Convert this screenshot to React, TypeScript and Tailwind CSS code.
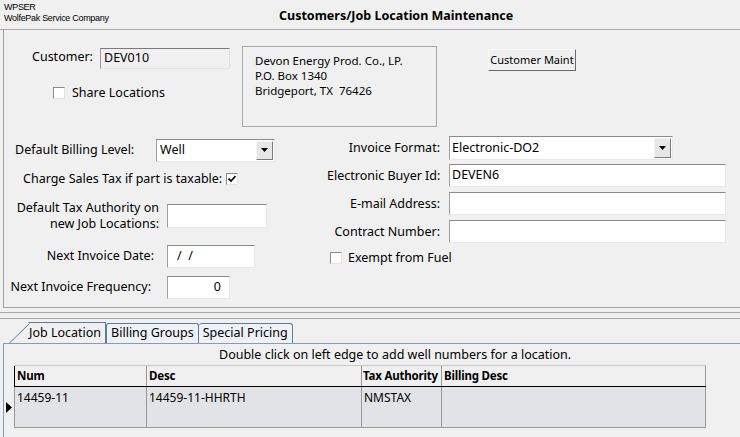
import React from "react";

const sunken = "border border-t-[#8a8a8a] border-l-[#a0a0a0] border-b-[#e8e8e8] border-r-[#e8e8e8] bg-white";

const DropArrow: React.FC = () => (
    <div className="flex h-full w-[17px] items-center justify-center border border-t-[#f4f4f4] border-l-[#f4f4f4] border-b-[#7a7a7a] border-r-[#7a7a7a] bg-[#e6e6e6]">
        <svg width="7" height="4" viewBox="0 0 7 4">
            <path d="M0 0h7L3.5 4z" fill="#000"/>
        </svg>
    </div>
)

const CheckBox: React.FC<{ checked?: boolean }> = ({checked}) => (
    <div className="flex h-[12px] w-[12px] items-center justify-center border border-t-[#8a8a8a] border-l-[#8a8a8a] border-b-[#e3e3e3] border-r-[#e3e3e3] bg-white">
        {checked && (
            <svg width="8" height="8" viewBox="0 0 8 8">
                <path d="M0.5 3.5L3 6L7.5 1" stroke="#000" strokeWidth="1.6" fill="none"/>
            </svg>
        )}
    </div>
)

const Label: React.FC<{ w: string, children: React.ReactNode }> = ({w, children}) => (
    <div className={`${w} shrink-0 whitespace-nowrap text-right leading-[16px]`}>{children}</div>
)

export default function App() {
    return (
        <div className="relative h-[437px] w-[740px] overflow-hidden bg-[#f0f0f0] text-[12.5px] text-black" style={{fontFamily: '"Noto Sans", sans-serif'}}>
            {/* header */}
            <div className="flex h-[30px] border-b border-[#a8a8a8]">
                <div className="w-[116px] whitespace-nowrap pl-[4px] pt-[2px] text-[9px] leading-[11px] tracking-[-0.3px]" style={{fontFamily: '"Liberation Sans", sans-serif'}}>
                    <div>WPSER</div>
                    <div>WolfePak Service Company</div>
                </div>
                <div className="ml-[163px] whitespace-nowrap pt-[7px] text-[12.5px] font-bold">Customers/Job Location Maintenance</div>
            </div>

            {/* main panel */}
            <div className="ml-[3px] h-[278px] border-l border-b border-[#a0a0a0]">
                <div className="flex pt-[16px]">
                    <div className="w-[238px]">
                        <div className="flex items-center">
                            <div className="ml-[28px] w-[68px]">Customer:</div>
                            <div className="mt-[2px] flex h-[21px] w-[130px] items-center border border-t-[#7a7a7a] border-l-[#9a9a9a] border-b-[#e3e3e3] border-r-[#e3e3e3] bg-[#f0f0f0] pl-[3px]">DEV010</div>
                        </div>
                        <div className="ml-[49px] mt-[15px] flex items-center gap-[7px]">
                            <CheckBox/>
                            <span>Share Locations</span>
                        </div>
                    </div>
                    <div className="h-[81px] w-[195px] border border-[#a8a8a8] pl-[12px] pt-[6px] text-[11.5px] leading-[15px]">
                        <div>Devon Energy Prod. Co., LP.</div>
                        <div>P.O. Box 1340</div>
                        <div>Bridgeport, TX&nbsp; 76426</div>
                    </div>
                    <div className="ml-[51px] mt-[3px] flex h-[22px] w-[88px] items-center justify-center whitespace-nowrap border border-t-[#fafafa] border-l-[#fafafa] border-b-[#6a6a6a] border-r-[#6a6a6a] bg-[#f0f0f0] text-[11px]">
                        Customer Maint
                    </div>
                </div>

                <div className="mt-[11px] flex">
                    {/* left column */}
                    <div className="w-[300px]">
                        <div className="flex h-[24px] items-center">
                            <div className="ml-[11px] w-[141px] whitespace-nowrap">Default Billing Level:</div>
                            <div className={`flex h-[23px] w-[119px] items-center justify-between ${sunken} p-[1px]`}>
                                <span className="pl-[2px]">Well</span>
                                <DropArrow/>
                            </div>
                        </div>
                        <div className="mt-[8px] flex items-center">
                            <span className="ml-[19px] whitespace-nowrap">Charge Sales Tax if part is taxable:</span>
                            <div className="ml-[4px]"><CheckBox checked/></div>
                        </div>
                        <div className="mt-[11px] flex items-center">
                            <Label w="w-[155px]">Default Tax Authority on<br/>new Job Locations:</Label>
                            <div className={`ml-[8px] h-[24px] w-[100px] ${sunken}`}/>
                        </div>
                        <div className="mt-[13px] flex items-center">
                            <Label w="w-[150px]">Next Invoice Date:</Label>
                            <div className={`ml-[13px] flex h-[23px] w-[88px] items-center pl-[9px] ${sunken}`}>/&nbsp;&nbsp;/</div>
                        </div>
                        <div className="mt-[8px] flex items-center">
                            <Label w="w-[147px]">Next Invoice Frequency:</Label>
                            <div className={`ml-[16px] flex h-[23px] w-[63px] items-center justify-end pr-[8px] ${sunken}`}>0</div>
                        </div>
                    </div>

                    {/* right column */}
                    <div className="ml-[23px] w-[400px]">
                        <div className="-mt-[2px] flex h-[24px] items-center">
                            <Label w="w-[113px]">Invoice Format:</Label>
                            <div className={`ml-[9px] flex h-[24px] w-[224px] items-center justify-between ${sunken} p-[1px]`}>
                                <span className="pl-[1px]">Electronic-DO2</span>
                                <DropArrow/>
                            </div>
                        </div>
                        <div className="mt-[4px] flex items-center">
                            <Label w="w-[113px]">Electronic Buyer Id:</Label>
                            <div className={`ml-[9px] flex h-[23px] w-[277px] items-center pl-[2px] ${sunken}`}>DEVEN6</div>
                        </div>
                        <div className="mt-[5px] flex items-center">
                            <Label w="w-[113px]">E-mail Address:</Label>
                            <div className={`ml-[9px] h-[23px] w-[277px] ${sunken}`}/>
                        </div>
                        <div className="mt-[5px] flex items-center">
                            <Label w="w-[113px]">Contract Number:</Label>
                            <div className={`ml-[9px] h-[23px] w-[277px] ${sunken}`}/>
                        </div>
                        <div className="mt-[6px] flex items-center gap-[6px] pl-[3px]">
                            <CheckBox/>
                            <span>Exempt from Fuel</span>
                        </div>
                    </div>
                </div>
            </div>

            <div className="mt-[4px] border-t border-[#a8a8a8]"/>
            <div className="mt-[5px] border-t border-[#a8a8a8]"/>

            {/* tabs */}
            <div className="ml-[8px] mt-[3px] flex h-[21px] items-end">
                <div className="relative flex h-[21px] items-center border-t border-r border-[#5a7aa0] pl-[21px] pr-[4px]" style={{clipPath: "polygon(21px 0, 100% 0, 100% 100%, 0 100%)"}}>
                    <svg className="absolute left-0 top-0" width="22" height="21" viewBox="0 0 22 21">
                        <path d="M0.5 21L21.5 0.5" stroke="#5a7aa0" strokeWidth="1" fill="none"/>
                    </svg>
                    Job Location
                </div>
                <div className="flex h-[20px] items-center rounded-t-[3px] border border-b-0 border-[#5a7aa0] bg-[#eef1f5] px-[4px]">Billing Groups</div>
                <div className="flex h-[20px] items-center rounded-t-[3px] border border-b-0 border-l-0 border-[#5a7aa0] bg-[#eef1f5] px-[4px]">Special Pricing</div>
            </div>

            <div className="ml-[3px] h-[100px] border-t border-l border-[#8a9ab0]">
                <div className="py-[3px] pl-[215px] leading-[15px]">Double click on left edge to add well numbers for a location.</div>
                <div className="ml-[10px] w-[692px] border-t border-[#c8c8c8]">
                    <div className="grid grid-cols-[132px_215px_80px_1fr] whitespace-nowrap border-b border-l border-black text-[11.5px] font-bold tracking-[-0.2px]">
                        <div className="h-[20px] overflow-hidden border-r border-[#999] pl-[2px] leading-[20px]">Num</div>
                        <div className="h-[20px] overflow-hidden border-r border-[#999] pl-[2px] leading-[20px]">Desc</div>
                        <div className="h-[20px] overflow-hidden border-r border-[#999] pl-[1px] leading-[20px]">Tax Authority</div>
                        <div className="h-[20px] overflow-hidden border-r border-[#999] pl-[2px] leading-[20px]">Billing Desc</div>
                    </div>
                    <div className="relative grid h-[41px] grid-cols-[132px_215px_80px_1fr] border-b border-l border-[#999] bg-[#e2e3e6] text-[12px]">
                        <div className="border-r border-[#999] pl-[2px] pt-[2px]">14459-11</div>
                        <div className="border-r border-[#999] pl-[2px] pt-[2px]">14459-11-HHRTH</div>
                        <div className="border-r border-[#999] pl-[2px] pt-[2px]">NMSTAX</div>
                        <div className="border-r border-[#999]"/>
                        <svg className="absolute left-[-9px] top-[15px]" width="6" height="11" viewBox="0 0 6 11">
                            <path d="M0 0L6 5.5L0 11z" fill="#000"/>
                        </svg>
                    </div>
                </div>
            </div>
        </div>
    )
}
